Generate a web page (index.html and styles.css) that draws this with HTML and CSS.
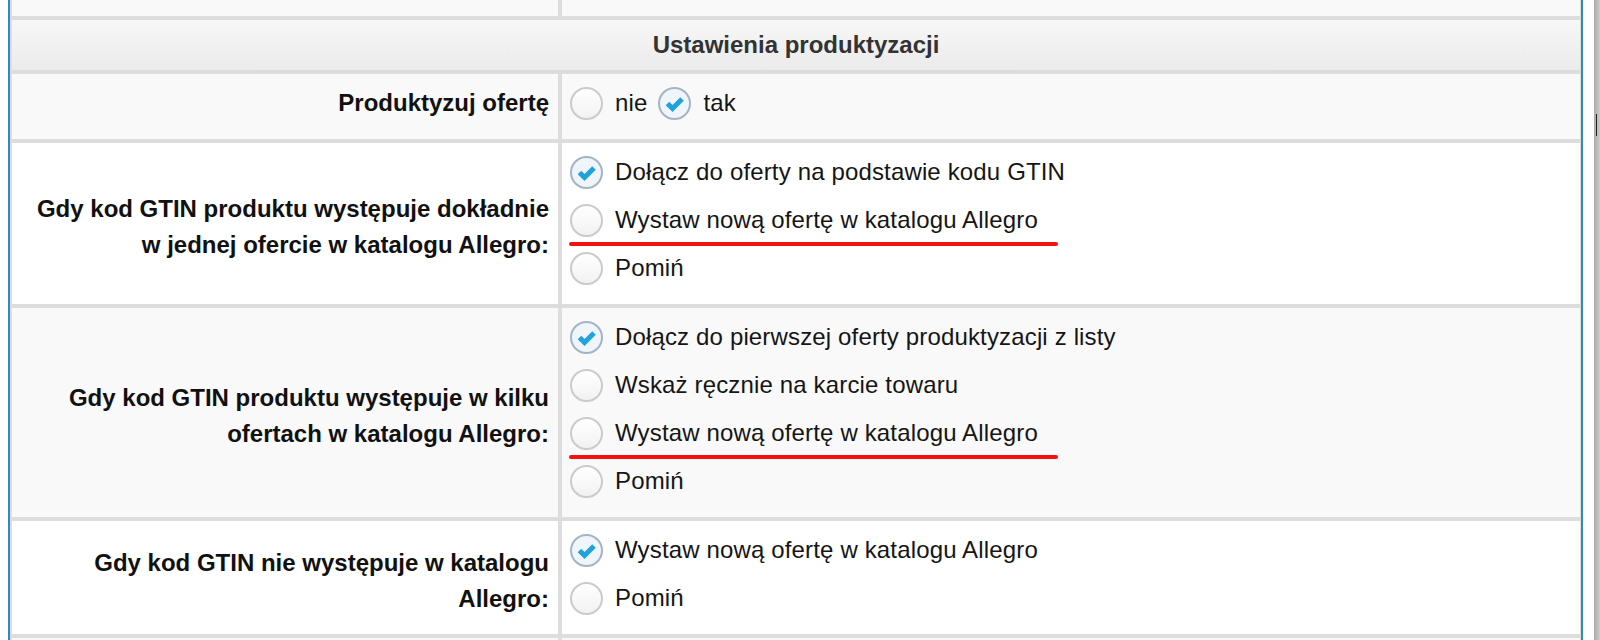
FILE: index.html
```html
<!DOCTYPE html>
<html>
<head>
	<title>Ustawienia produktyzacji</title>
	<meta charset="utf-8">
	<link rel="stylesheet" href="styles.css">
</head>
<body>
	<div class="panel">
		<div class="form">
			<div class="row alt top">
				<div class="label"></div>
				<div class="value"></div>
			</div>

			<div class="section">Ustawienia produktyzacji</div>

			<div class="row alt">
				<div class="label single">Produktyzuj ofertę</div>
				<div class="value">
					<div class="inline">
						<label class="opt"><span class="radio"></span>nie</label>
						<label class="opt"><span class="radio on"><svg viewBox="0 0 29 29"><path d="M7.5 14.5 L12.5 19.5 L22 10"/></svg></span>tak</label>
					</div>
				</div>
			</div>

			<div class="row">
				<div class="label">Gdy kod GTIN produktu występuje dokładnie w jednej ofercie w katalogu Allegro:</div>
				<div class="value">
					<label class="opt"><span class="radio on"><svg viewBox="0 0 29 29"><path d="M7.5 14.5 L12.5 19.5 L22 10"/></svg></span>Dołącz do oferty na podstawie kodu GTIN</label>
					<label class="opt"><span class="radio"></span>Wystaw nową ofertę w katalogu Allegro<span class="mark"></span></label>
					<label class="opt"><span class="radio"></span>Pomiń</label>
				</div>
			</div>

			<div class="row alt">
				<div class="label">Gdy kod GTIN produktu występuje w kilku ofertach w katalogu Allegro:</div>
				<div class="value">
					<label class="opt"><span class="radio on"><svg viewBox="0 0 29 29"><path d="M7.5 14.5 L12.5 19.5 L22 10"/></svg></span>Dołącz do pierwszej oferty produktyzacji z listy</label>
					<label class="opt"><span class="radio"></span>Wskaż ręcznie na karcie towaru</label>
					<label class="opt"><span class="radio"></span>Wystaw nową ofertę w katalogu Allegro<span class="mark"></span></label>
					<label class="opt"><span class="radio"></span>Pomiń</label>
				</div>
			</div>

			<div class="row">
				<div class="label">Gdy kod GTIN nie występuje w katalogu Allegro:</div>
				<div class="value">
					<label class="opt"><span class="radio on"><svg viewBox="0 0 29 29"><path d="M7.5 14.5 L12.5 19.5 L22 10"/></svg></span>Wystaw nową ofertę w katalogu Allegro</label>
					<label class="opt"><span class="radio"></span>Pomiń</label>
				</div>
			</div>

			<div class="row alt">
				<div class="label"></div>
				<div class="value"></div>
			</div>
		</div>
	</div>

	<div class="edge"><span class="caret"></span></div>
</body>
</html>
```

FILE: styles.css
```css
html, body {
	height: 100%;
	overflow: hidden;
}
body {
	margin: 0;
	padding-left: 8px;
	display: flex;
	background: #fff;
	font-family: "Liberation Sans", Arial, sans-serif;
	font-size: 24px;
	color: #151515;
}
.panel {
	width: 1571px;
	border-left: 2px solid #2f87c6;
	border-right: 2px solid #2f87c6;
}
.form {
	display: flex;
	flex-direction: column;
	gap: 4px;
	padding: 0 1px 0 2px;
	background: #dddddd;
	min-height: 100%;
}
.row {
	display: grid;
	grid-template-columns: 546px 1fr;
	gap: 4px;
}
.row > div {
	background: #fff;
}
.row.alt > div {
	background: #f9f9f9;
}
.row.top {
	height: 16px;
}
.row.top > div {
	padding: 0;
}
.section {
	height: 50px;
	line-height: 50px;
	text-align: center;
	font-weight: bold;
	color: #333;
	background: linear-gradient(#f7f7f7, #ebebeb);
}
.label {
	display: flex;
	align-items: center;
	justify-content: flex-end;
	text-align: right;
	padding: 7px 9px 0 10px;
	font-weight: bold;
	line-height: 36px;
	color: #111;
}
.label.single {
	align-items: flex-start;
	padding-top: 11px;
}
.value {
	padding: 11px 8px 6px 8px;
	letter-spacing: 0.15px;
}
.inline {
	display: flex;
	gap: 11px;
}
.opt {
	position: relative;
	display: flex;
	align-items: center;
	gap: 12px;
	height: 36px;
	margin-bottom: 12px;
	line-height: 36px;
	white-space: nowrap;
}
.radio {
	box-sizing: border-box;
	width: 33px;
	height: 33px;
	border: 2px solid #cbcbcb;
	border-radius: 50%;
	background: linear-gradient(#ffffff, #f2f2f2);
	flex: none;
}
.radio.on {
	border-color: #a3b5c3;
	background: #eff5fa;
}
.radio svg {
	display: block;
	width: 29px;
	height: 29px;
}
.radio path {
	fill: none;
	stroke: #1fa3da;
	stroke-width: 5;
}
.mark {
	position: absolute;
	left: -1px;
	top: 40px;
	width: 489px;
	height: 4px;
	border-radius: 2px;
	background: #f21212;
}
.edge {
	width: 6px;
	margin-left: 11px;
	background: linear-gradient(to right, #a9a9a9, #cdcdcd);
}
.caret {
	display: block;
	width: 1px;
	height: 22px;
	margin: 114px 0 0 2px;
	background: #222;
}
```
